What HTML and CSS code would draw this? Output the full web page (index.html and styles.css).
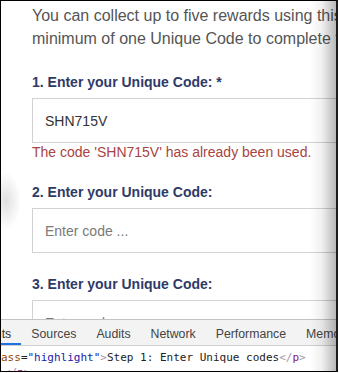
FILE: index.html
```html
<!DOCTYPE html>
<html lang="en">
<head>
  <meta charset="UTF-8" />
  <meta name="viewport" content="width=device-width, initial-scale=1" />
  <title>Step 1: Enter Unique codes</title>
  <link rel="stylesheet" href="styles.css">
</head>
<body>

  <div class="frame">
    <!-- page -->
    <div class="page">
      <p class="intro">
        You can collect up to five rewards using this form and need a<br>
        minimum of one Unique Code to complete the form.
      </p>

      <div class="group">
        <label class="label" for="code1">1. Enter your Unique Code: *</label>
        <input class="code-input" id="code1" type="text" value="SHN715V" />
        <div class="error">The code 'SHN715V' has already been used.</div>
      </div>

      <div class="group">
        <label class="label" for="code2">2. Enter your Unique Code:</label>
        <input class="code-input" id="code2" type="text" placeholder="Enter code ..." />
      </div>

      <div class="group">
        <label class="label" for="code3">3. Enter your Unique Code:</label>
        <input class="code-input" id="code3" type="text" placeholder="Enter code ..." />
      </div>
    </div>

    <!-- devtools -->
    <div class="devtools">
      <div class="tabs">
        <div class="tab active">Elements</div>
        <div class="tab">Sources</div>
        <div class="tab">Audits</div>
        <div class="tab">Network</div>
        <div class="tab">Performance</div>
        <div class="tab">Memory</div>
      </div>
      <div class="code">
        <div class="code-line"><span class="attr">ass</span>=<span class="val">"highlight"</span><span class="br">&gt;</span>Step 1: Enter Unique codes<span class="br">&lt;/</span><span class="tag">p</span><span class="br">&gt;</span></div>
        <div class="code-line indent"><span class="br">&lt;/</span><span class="tag">p</span><span class="br">&gt;</span></div>
      </div>
    </div>

    <div class="edge-shadow"></div>
    <div class="side-blur"></div>
  </div>

</body>
</html>
```

FILE: styles.css
```css
body {
  margin: 0;
  background: #ffffff;
  font-family: 'Liberation Sans', Arial, sans-serif;
}

.frame {
  position: relative;
  width: 335px;
  height: 370px;
  border-left: 1px solid #000;
  border-top: 1px solid #000;
  border-right: 2px solid #1c1c1c;
  border-bottom: 1px solid #000;
  display: flex;
  flex-direction: column;
  overflow: hidden;
  background: #fff;
}

.page {
  height: 318px;
  flex: none;
  overflow: hidden;
  padding: 3px 0 0 31px;
  width: 420px;
  box-sizing: border-box;
}

.intro {
  margin: 0 0 22px;
  font-size: 16px;
  line-height: 23px;
  color: #555;
  white-space: nowrap;
}

.group {
  margin-bottom: 21px;
}

.label {
  display: block;
  font-size: 14px;
  line-height: 20px;
  font-weight: bold;
  color: #2f3a68;
  margin-bottom: 6px;
}

.code-input {
  display: block;
  box-sizing: border-box;
  width: 100%;
  height: 45px;
  margin: 0;
  padding: 0 12px;
  border: 1px solid #d2d2d2;
  border-radius: 0;
  font-family: 'Liberation Sans', Arial, sans-serif;
  font-size: 14px;
  color: #333;
  background: #fff;
  outline: none;
}

.code-input::placeholder {
  color: #7a7a7a;
}

.error {
  font-size: 14px;
  line-height: 18px;
  color: #a94442;
  margin-bottom: 2px;
}

/* devtools panel */
.devtools {
  flex: 1;
  border-top: 1px solid #c4c4c4;
  display: flex;
  flex-direction: column;
  background: #fff;
}

.tabs {
  display: flex;
  height: 25px;
  background: #f3f3f3;
  border-bottom: 1px solid #cfcfcf;
  white-space: nowrap;
}

.tab {
  padding: 0 10px;
  font-size: 12.3px;
  line-height: 28px;
  color: #444;
  border-bottom: 2px solid transparent;
  height: 23px;
}

.tab.active {
  margin-left: -51px;
  border-bottom-color: #1a73e8;
  color: #333;
}

.code {
  padding-top: 4px;
  font-family: 'DejaVu Sans Mono', 'Liberation Mono', monospace;
  font-size: 11px;
  line-height: 15px;
  color: #222;
  white-space: nowrap;
}

.code-line.indent { padding-left: 3px; }

.attr { color: #994500; }
.val { color: #1a1aa6; }
.tag { color: #881280; }
.br { color: #a894a6; }

/* overlays */
.edge-shadow {
  position: absolute;
  top: 0;
  bottom: 0;
  right: 0;
  width: 26px;
  background: linear-gradient(to right, rgba(0, 0, 0, 0), rgba(0, 0, 0, 0.06) 45%, rgba(0, 0, 0, 0.28));
  pointer-events: none;
}

.side-blur {
  position: absolute;
  left: -10px;
  top: 170px;
  width: 30px;
  height: 60px;
  background: radial-gradient(ellipse at center, rgba(0, 0, 0, 0.12), rgba(0, 0, 0, 0) 70%);
  pointer-events: none;
}
```
